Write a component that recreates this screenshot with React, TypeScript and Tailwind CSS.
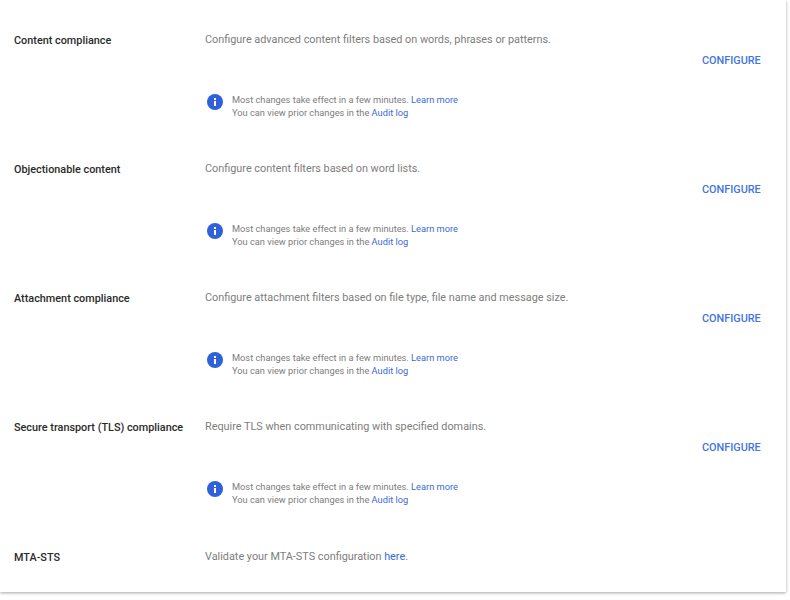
const rows = [
  { name: "Content compliance", desc: "Configure advanced content filters based on words, phrases or patterns." },
  { name: "Objectionable content", desc: "Configure content filters based on word lists." },
  { name: "Attachment compliance", desc: "Configure attachment filters based on file type, file name and message size." },
  { name: "Secure transport (TLS) compliance", desc: "Require TLS when communicating with specified domains." },
];

function InfoIcon() {
  return (
    <svg width="16" height="16" viewBox="0 0 16 16" className="mt-[1px] shrink-0">
      <circle cx="8" cy="8" r="8" fill="#2f62d8" />
      <rect x="7" y="7" width="2" height="5" fill="#fff" />
      <rect x="7" y="4" width="2" height="2" fill="#fff" />
    </svg>
  );
}

function Row({ name, desc }: { name: string; desc: string }) {
  return (
    <div className="flex h-[129px]">
      <div className="w-[205px] shrink-0 pl-[14px] pt-[32px] text-[10.85px] leading-[16px] font-medium text-[#2a2a2a]">{name}</div>
      <div className="flex-1 pt-[31px]">
        <div className="text-[10.85px] leading-[16px] text-[#7d7d7d]">{desc}</div>
        <div className="mt-[45px] flex items-start gap-[9px] pl-[2px]">
          <InfoIcon />
          <div className="text-[9.25px] leading-[13px] text-[#7d7d7d]">
            <div>Most changes take effect in a few minutes. <span className="text-[#3a6ad8]">Learn more</span></div>
            <div>You can view prior changes in the <span className="text-[#3a6ad8]">Audit log</span></div>
          </div>
        </div>
      </div>
      <div className="w-[84px] shrink-0 pt-[52px] text-[10.85px] leading-[16px] font-medium text-[#4274e2]">CONFIGURE</div>
    </div>
  );
}

export default function App() {
  return (
    <div className="h-[600px] w-[790px] bg-white font-['Roboto',sans-serif]">
      <div className="h-[592px] w-[786px] bg-white pt-[1px] shadow-[0_1px_3px_rgba(0,0,0,0.35)]">
        {rows.map((r) => (
          <Row key={r.name} name={r.name} desc={r.desc} />
        ))}
        <div className="flex">
          <div className="w-[205px] shrink-0 pl-[14px] pt-[33px] text-[10.85px] leading-[16px] font-medium text-[#2a2a2a]">MTA-STS</div>
          <div className="pt-[32px] text-[10.85px] leading-[16px] text-[#7d7d7d]">
            Validate your MTA-STS configuration <span className="text-[#3a6ad8]">here</span>.
          </div>
        </div>
      </div>
    </div>
  );
}
